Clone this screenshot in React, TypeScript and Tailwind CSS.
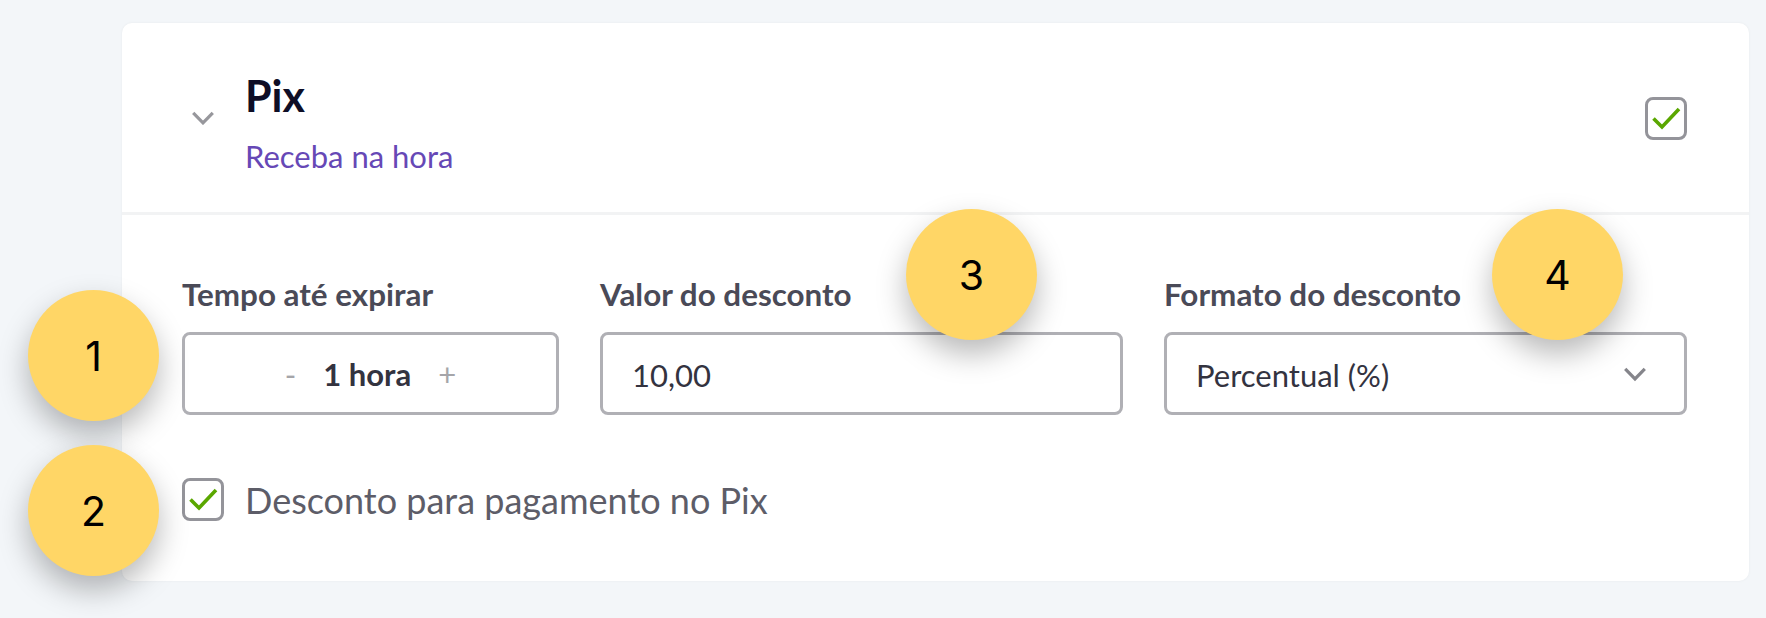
function Check() {
  return (
    <div className="flex h-[43px] w-[42px] shrink-0 items-center justify-center rounded-[8px] border-[3px] border-[#94949a] bg-white">
      <svg width="29" height="23" viewBox="0 0 29 23" fill="none">
        <path d="M1.5 11.5 L10 20 L27 2" stroke="#5aa700" strokeWidth="3.6" />
      </svg>
    </div>
  )
}

function Chevron({ color, width }: { color: string; width: number }) {
  return (
    <svg width={width} height={width * 0.64} viewBox="0 0 22 14" fill="none">
      <path d="M1.2 1.8 L11 11.8 L20.8 1.8" stroke={color} strokeWidth="3.2" />
    </svg>
  )
}

function Marker({ n, className }: { n: number; className: string }) {
  return (
    <div
      className={`absolute flex h-[131px] w-[131px] items-center justify-center rounded-full bg-[#ffd666] pt-[2px] text-[41px] text-black shadow-[0_14px_30px_rgba(0,0,0,0.28)] [font-family:Inter,sans-serif] ${className}`}
    >
      {n}
    </div>
  )
}

export default function App() {
  return (
    <div className="relative h-[618px] w-[1766px] overflow-hidden bg-[#f3f6f9] pt-[23px] pr-[17px] pl-[122px] [font-family:Lato,sans-serif]">
      <div className="h-[558px] rounded-[10px] bg-white shadow-[0_0_3px_rgba(0,0,0,0.05)]">
        {/* HEADER */}
        <div className="flex h-[192px] items-start border-b-[3px] border-[#f2f3f4] pr-[62px]">
          <div className="mt-[88px] ml-[70px] w-[53px]">
            <Chevron color="#97979c" width={22} />
          </div>
          <div className="pt-[49px]">
            <h1 className="text-[43px] leading-[48px] font-bold text-[#0e0e26]">Pix</h1>
            <p className="mt-[19px] text-[31px] leading-[34px] text-[#6648b6]">Receba na hora</p>
          </div>
          <div className="mt-[74px] ml-auto">
            <Check />
          </div>
        </div>

        {/* FORM */}
        <div className="px-[60px] pt-[62px]">
          <div className="grid grid-cols-[377px_523px_523px] gap-x-[41px]">
            <div>
              <label className="block text-[31.4px] leading-[34px] font-bold text-[#4a4a57]">Tempo até expirar</label>
              <div className="mt-[21px] flex h-[83px] items-center justify-center rounded-[8px] border-[3px] border-[#b0b0b5] pt-[2px] text-[31px]">
                <span className="text-[#a5a5a9]">-</span>
                <span className="mx-[27px] font-bold text-[#33333f]">1 hora</span>
                <span className="text-[#a5a5a9]">+</span>
              </div>
            </div>
            <div>
              <label className="block text-[31.4px] leading-[34px] font-bold text-[#4a4a57]">Valor do desconto</label>
              <div className="mt-[21px] flex h-[83px] items-center rounded-[8px] border-[3px] border-[#b0b0b5] pt-[4px] pl-[29px] text-[31px] text-[#33333f]">
                10,00
              </div>
            </div>
            <div>
              <label className="block text-[31.4px] leading-[34px] font-bold text-[#4a4a57]">Formato do desconto</label>
              <div className="mt-[21px] flex h-[83px] items-center justify-between rounded-[8px] border-[3px] border-[#b0b0b5] pt-[2px] pr-[38px] pl-[29px] text-[31px] text-[#33333f]">
                <span className="pt-[2px]">Percentual (%)</span>
                <Chevron color="#85858b" width={22} />
              </div>
            </div>
          </div>

          <div className="mt-[63px] flex items-center gap-[21px]">
            <Check />
            <span className="pt-[1px] text-[36px] leading-[40px] text-[#5d5d68]">Desconto para pagamento no Pix</span>
          </div>
        </div>
      </div>

      <Marker n={1} className="top-[290px] left-[28px]" />
      <Marker n={2} className="top-[445px] left-[28px]" />
      <Marker n={3} className="top-[209px] left-[906px]" />
      <Marker n={4} className="top-[209px] left-[1492px]" />
    </div>
  )
}
